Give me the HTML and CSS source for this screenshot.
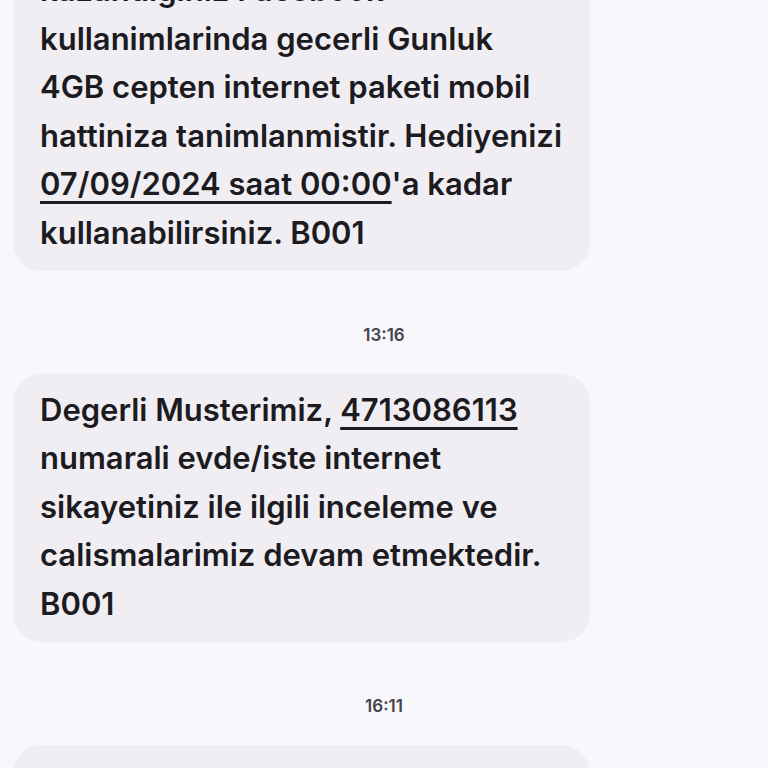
FILE: index.html
```html
<!DOCTYPE html>
<html lang="tr">
<head>
<meta charset="utf-8">
<title>Mesajlar</title>
<link rel="stylesheet" href="styles.css">
</head>
<body>
<main class="thread">
  <div class="bubble bubble-first">
    <p class="msg">kazandiginiz Facebook<br>kullanimlarinda gecerli Gunluk<br>4GB cepten internet paketi mobil<br>hattiniza tanimlanmistir. Hediyenizi<br><span class="link">07/09/2024 saat 00:00</span>'a kadar<br>kullanabilirsiniz. B001</p>
  </div>
  <div class="stamp">13:16</div>
  <div class="bubble">
    <p class="msg">Degerli Musterimiz, <span class="link">4713086113</span><br>numarali evde/iste internet<br>sikayetiniz ile ilgili inceleme ve<br>calismalarimiz devam etmektedir.<br>B001</p>
  </div>
  <div class="stamp">16:11</div>
  <div class="bubble">
    <p class="msg">Degerli Musterimiz, <span class="link">4713086113</span><br>numarali evde/iste internet</p>
  </div>
</main>
</body>
</html>
```
FILE: styles.css
```css
html, body {
  margin: 0;
  padding: 0;
  background: #f7f7fc;
  height: 100%;
  overflow: hidden;
}
.thread {
  display: flex;
  flex-direction: column;
  align-items: flex-start;
  padding-left: 13px;
  margin-top: -46px;
  font-family: Inter, "Noto Sans", sans-serif;
  color: #1c1b1f;
}
.bubble {
  width: 577px;
  box-sizing: border-box;
  background: #f0eef3;
  border-radius: 28px;
  padding: 12px 10px 13px 27px;
}
.msg {
  margin: 0;
  font-size: 31px;
  font-weight: 600;
  line-height: 48.6px;
  white-space: nowrap;
  letter-spacing: 0;
}
.link {
  text-decoration: underline;
  text-decoration-thickness: 2.5px;
  text-underline-offset: 6px;
}
.stamp {
  align-self: stretch;
  margin-left: -13px;
  text-align: center;
  font-family: Inter, "Noto Sans", sans-serif;
  font-size: 17px;
  font-weight: 600;
  line-height: 20px;
  color: #46444b;
  margin-top: 54px;
  margin-bottom: 29px;
}
```
